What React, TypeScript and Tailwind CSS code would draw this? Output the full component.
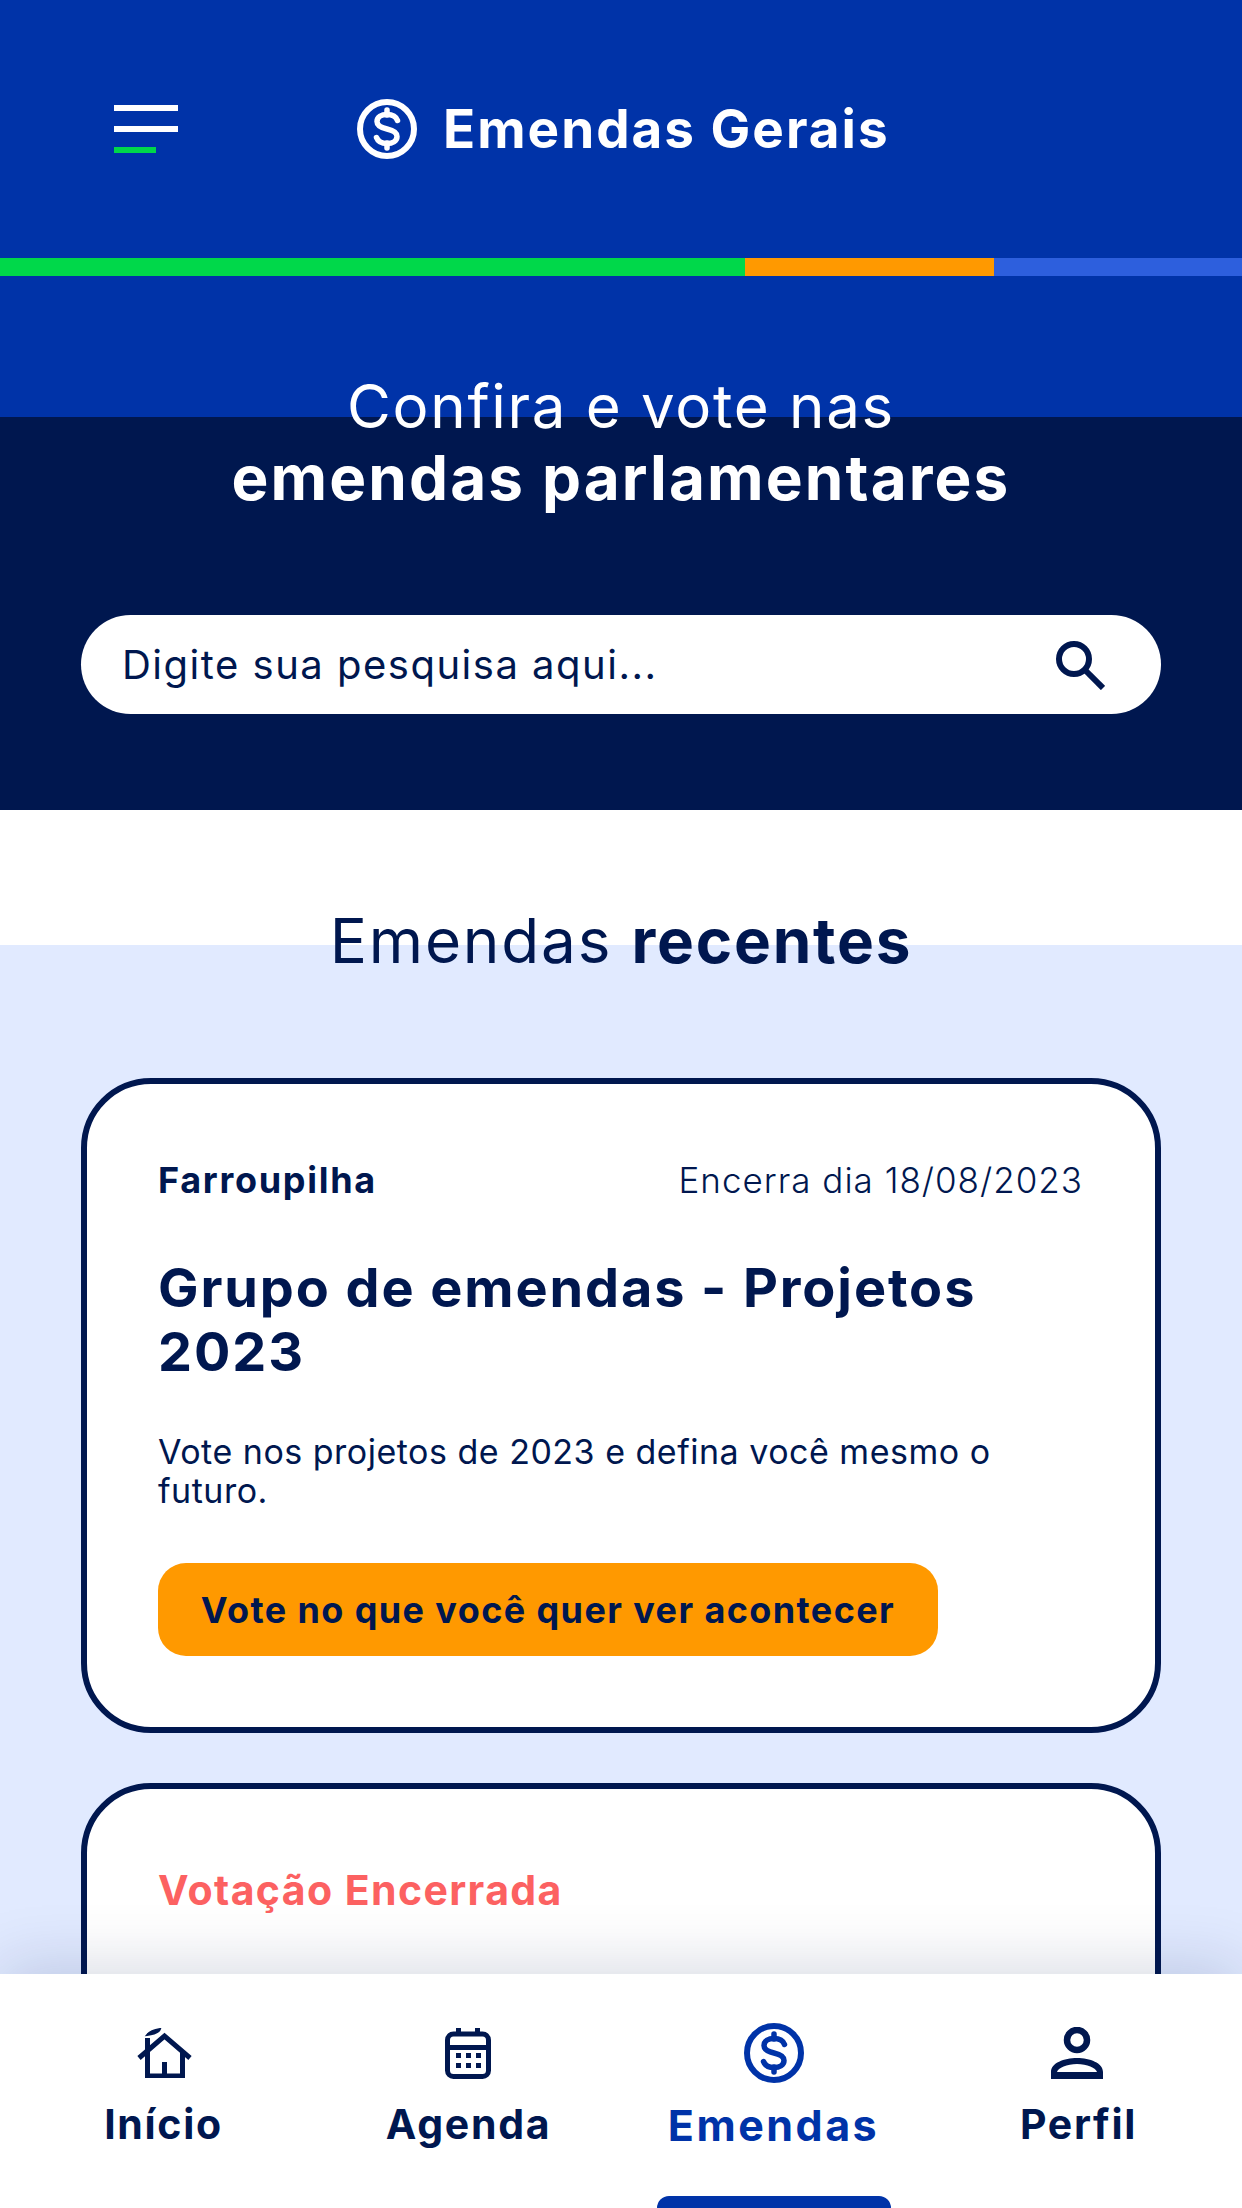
import React from 'react';

const font = "font-['Inter','Noto_Sans',sans-serif]";

const DollarIcon: React.FC<{ className?: string }> = ({ className }) => (
  <svg viewBox="0 0 60 60" className={className} fill="none" stroke="currentColor">
    <circle cx="30" cy="30" r="27" strokeWidth="6" />
    <path d="M40.500 21.500C39 17.500 35 15.500 30 15.500c-5.500 0-10 2.500-10 7 0 4.500 4.500 6.300 10 7.500 5.500 1.200 10 3 10 7.500 0 4.500-4.500 7-10 7-5 0-9-2-10.500-6" strokeWidth="5.500" strokeLinecap="round" />
    <path d="M30 11v5M30 44v5" strokeWidth="5.500" strokeLinecap="round" />
  </svg>
);

const HomeIcon = () => (
  <svg viewBox="0 0 56 50" className="ml-[2px] h-[50px] w-[56px]" fill="none" stroke="currentColor">
    <path d="M2 30 27.500 8 53 30" strokeWidth="5" />
    <path d="M10.500 10v38h35V24" strokeWidth="5" />
    <path d="M27.500 48V34" strokeWidth="5" />
    <path d="M10 7c3-4 7-5 13-6-1 3-5 5-13 6Z" fill="currentColor" strokeWidth="2" />
  </svg>
);

const CalendarIcon = () => (
  <svg viewBox="0 0 46 52" className="mr-[2px] h-[52px] w-[46px]" fill="currentColor">
    <rect x="2.500" y="7" width="41" height="42.500" rx="6" fill="none" stroke="currentColor" strokeWidth="5" />
    <path d="M2 18h42v5H2zM11 1h5v8h-5zM30 1h5v8h-5z" />
    <path d="M11 26h5v5h-5zM21 26h5v5h-5zM31 26h5v5h-5zM11 36h5v5h-5zM21 36h5v5h-5zM31 36h5v5h-5z" />
  </svg>
);

const PersonIcon = () => (
  <svg viewBox="0 0 54 52" className="mr-[4px] h-[52px] w-[54px]" fill="currentColor">
    <circle cx="27" cy="13" r="10" fill="none" stroke="currentColor" strokeWidth="6.500" />
    <path d="M1 52V45c0-9 13-14 26-14s26 5 26 14v7ZM7 45h40c-1-4-10-8-20-8S8 41 7 45Z" fillRule="evenodd" />
  </svg>
);

const NavItem: React.FC<{ label: string; icon: React.ReactNode; active?: boolean }> = ({ label, icon, active }) => (
  <div className={`relative flex flex-1 flex-col items-center ${active ? 'text-[#0033a8]' : 'text-[#00174f]'}`}>
    <div className="flex h-[62px] items-center">{icon}</div>
    <span className={`font-bold ${active ? 'mt-[16px] text-[43px] leading-[50px] tracking-[2.500px]' : 'mt-[15px] text-[41px] leading-[50px] tracking-[1.700px]'}`}>{label}</span>
  </div>
);

export default function App() {
  return (
    <div className={`relative h-[2208px] w-[1242px] overflow-hidden bg-[#e1eaff] text-[#00174f] ${font}`}>
      <header className="flex h-[258px] items-center bg-[#0033a8] pl-[114px] text-white">
        <div className="flex w-[64px] flex-col gap-[15px]">
          <span className="h-[6px] w-[64px] bg-white" />
          <span className="h-[6px] w-[64px] bg-white" />
          <span className="h-[6px] w-[42px] bg-[#00d84a]" />
        </div>
        <div className="ml-[179px] flex items-center gap-[26px]">
          <DollarIcon className="h-[60px] w-[60px]" />
          <span className="text-[53px] font-bold leading-none tracking-[2px]">Emendas Gerais</span>
        </div>
      </header>
      <div className="flex h-[18px]">
        <span className="w-[745px] bg-[#00d84a]" />
        <span className="w-[249px] bg-[#ff9900]" />
        <span className="flex-1 bg-[#2d5fdd]" />
      </div>

      <section className="h-[534px] bg-[linear-gradient(#0033a8_141px,#00174f_141px)] pt-[94px] text-center text-white">
        <h1 className="text-[60px] leading-[72px] tracking-[1.700px]">
          Confira e vote nas
          <br />
          <b className="text-[62px] font-bold tracking-[2.100px]">emendas parlamentares</b>
        </h1>
        <div className="mx-[81px] mt-[101px] flex h-[99px] items-center justify-between rounded-full bg-white pl-[41px] pr-[56px] text-[#00174f]">
          <span className="text-[40px] font-normal tracking-[1.500px]">Digite sua pesquisa aqui...</span>
          <svg viewBox="0 0 50 50" className="h-[50px] w-[50px]" fill="none" stroke="currentColor" strokeWidth="6">
            <circle cx="19" cy="19" r="15" />
            <path d="m30 30 18 18" />
          </svg>
        </div>
      </section>

      <section className="bg-[linear-gradient(#ffffff_135px,#e1eaff_135px)] pt-[95px]">
        <h2 className="text-center text-[62px] leading-[72px] tracking-[1.800px]">
          Emendas <b className="font-bold">recentes</b>
        </h2>
        <div className="mx-[81px] mt-[101px] flex flex-col gap-[50px]">
          <article className="h-[655px] rounded-[70px] border-[6px] border-[#00174f] bg-white pl-[71px] pr-[72px] pt-[74px]">
            <div className="flex items-center justify-between leading-[44px]">
              <span className="text-[36px] font-bold tracking-[1.700px]">Farroupilha</span>
              <span className="text-[35px] font-light tracking-[1px]">Encerra dia 18/08/2023</span>
            </div>
            <h3 className="mt-[54px] text-[54px] font-bold leading-[64px] tracking-[1.900px]">Grupo de emendas - Projetos 2023</h3>
            <p className="mt-[48px] text-[34px] font-normal leading-[39px] tracking-[0.500px]">Vote nos projetos de 2023 e defina você mesmo o futuro.</p>
            <button className="mt-[53px] flex h-[93px] w-[780px] items-center justify-center rounded-[28px] bg-[#ff9900] text-[36px] font-bold tracking-[1.400px]">
              Vote no que você quer ver acontecer
            </button>
          </article>
          <article className="h-[655px] rounded-[70px] border-[6px] border-[#00174f] bg-white pl-[71px] pr-[72px] pt-[76px]">
            <span className="text-[41px] font-bold leading-[50px] tracking-[1.400px] text-[#fc6161]">Votação Encerrada</span>
          </article>
        </div>
      </section>

      <nav className="absolute bottom-0 left-0 flex h-[234px] w-full bg-white px-[11px] pt-[48px] shadow-[0_-8px_60px_rgba(0,23,79,0.16)]">
        <NavItem label="Início" icon={<HomeIcon />} />
        <NavItem label="Agenda" icon={<CalendarIcon />} />
        <NavItem label="Emendas" icon={<DollarIcon className="h-[60px] w-[60px]" />} active />
        <NavItem label="Perfil" icon={<PersonIcon />} />
        <span className="absolute bottom-0 left-[657px] h-[12px] w-[234px] rounded-t-[16px] bg-[#0033a8]" />
      </nav>
    </div>
  );
}
